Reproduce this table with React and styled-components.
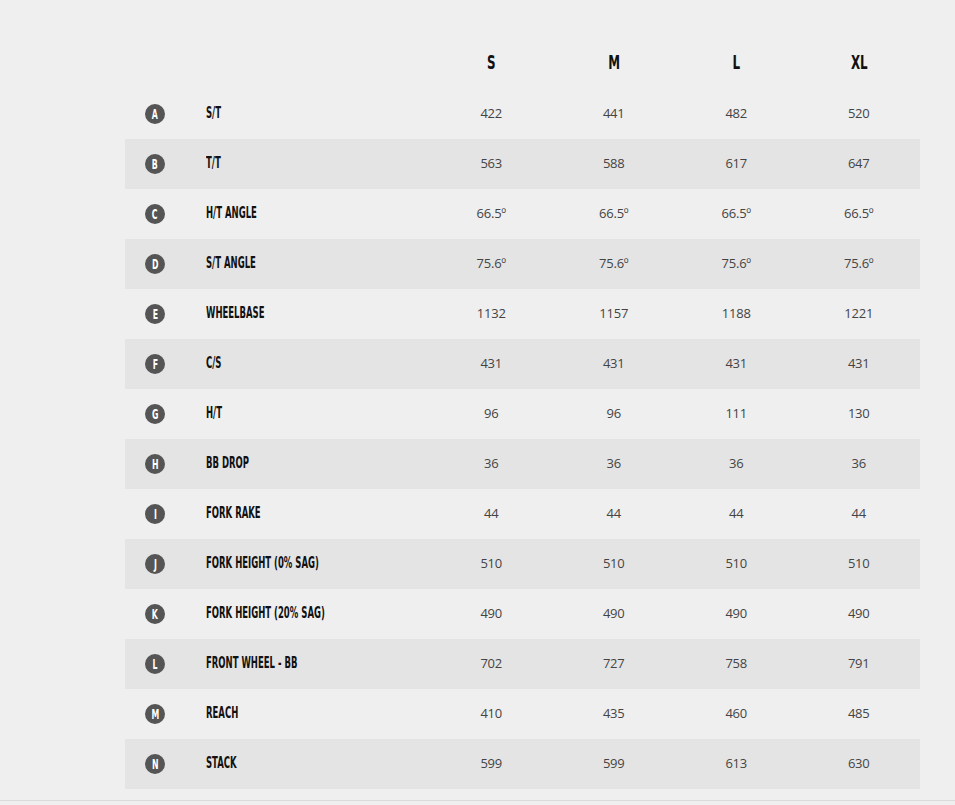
import React from 'react';
import styled, { createGlobalStyle } from 'styled-components';

const GlobalStyle = createGlobalStyle`
  body {
    margin: 0;
    background: #efefef;
    font-family: "Open Sans", "Liberation Sans", sans-serif;
  }
`

const sizes = ["S", "M", "L", "XL"];
const rows = [
  ["A", "S/T", ["422", "441", "482", "520"]],
  ["B", "T/T", ["563", "588", "617", "647"]],
  ["C", "H/T Angle", ["66.5º", "66.5º", "66.5º", "66.5º"]],
  ["D", "S/T Angle", ["75.6º", "75.6º", "75.6º", "75.6º"]],
  ["E", "Wheelbase", ["1132", "1157", "1188", "1221"]],
  ["F", "C/S", ["431", "431", "431", "431"]],
  ["G", "H/T", ["96", "96", "111", "130"]],
  ["H", "BB Drop", ["36", "36", "36", "36"]],
  ["I", "Fork Rake", ["44", "44", "44", "44"]],
  ["J", "Fork Height (0% SAG)", ["510", "510", "510", "510"]],
  ["K", "Fork Height (20% SAG)", ["490", "490", "490", "490"]],
  ["L", "Front Wheel - BB", ["702", "727", "758", "791"]],
  ["M", "Reach", ["410", "435", "460", "485"]],
  ["N", "Stack", ["599", "599", "613", "630"]],
];

const Page = styled.div`
  padding: 39px 0 11px 125px;
  border-bottom: 1px solid #dadada;
`
const Table = styled.div`
  width: 795px;
  display: flex;
  flex-direction: column;
`
const Row = styled.div`
  display: grid;
  grid-template-columns: 60px 245px repeat(4, 1fr);
  align-items: center;
  height: 50px;
  background: ${p => (p.$shaded ? "#e4e4e4" : "transparent")};
`
const HeadCell = styled.div`
  font-family: "DejaVu Sans Condensed", "Liberation Sans Narrow", sans-serif;
  font-weight: bold;
  font-size: 20px;
  color: #111;
  text-align: center;
  transform: scaleX(0.66);
  margin-top: -4px;
`
const Badge = styled.div`
  justify-self: center;
  width: 20px;
  height: 20px;
  border-radius: 50%;
  background: #555;
  color: #fff;
  display: flex;
  align-items: center;
  justify-content: center;
  font-family: "DejaVu Sans Condensed", sans-serif;
  font-weight: bold;
  font-size: 14px;
  span { transform: scaleX(0.62); margin-top: -1px; }
`
const Label = styled.div`
  display: flex;
  align-items: center;
  padding-left: 21px;
  white-space: nowrap;
  span {
    font-family: "DejaVu Sans Condensed", "Liberation Sans Narrow", "Liberation Sans", sans-serif;
    font-weight: bold;
    font-size: 15px;
    text-transform: uppercase;
    color: #111;
    transform: scaleX(0.63);
    transform-origin: left center;
    margin-top: -3px;
  }
`
const Value = styled.div`
  font-size: 13px;
  color: #444;
  text-align: center;
  letter-spacing: -0.2px;
  margin-top: -2px;
`

export default function App() {
  return (
    <>
      <GlobalStyle />
      <Page>
        <Table>
          <Row>
            <div />
            <div />
            {sizes.map(s => <HeadCell key={s}>{s}</HeadCell>)}
          </Row>
          {rows.map(([key, label, vals], i) => (
            <Row key={key} $shaded={i % 2 === 1}>
              <Badge><span>{key}</span></Badge>
              <Label><span>{label}</span></Label>
              {vals.map((v, j) => <Value key={j}>{v}</Value>)}
            </Row>
          ))}
        </Table>
      </Page>
    </>
  );
}
